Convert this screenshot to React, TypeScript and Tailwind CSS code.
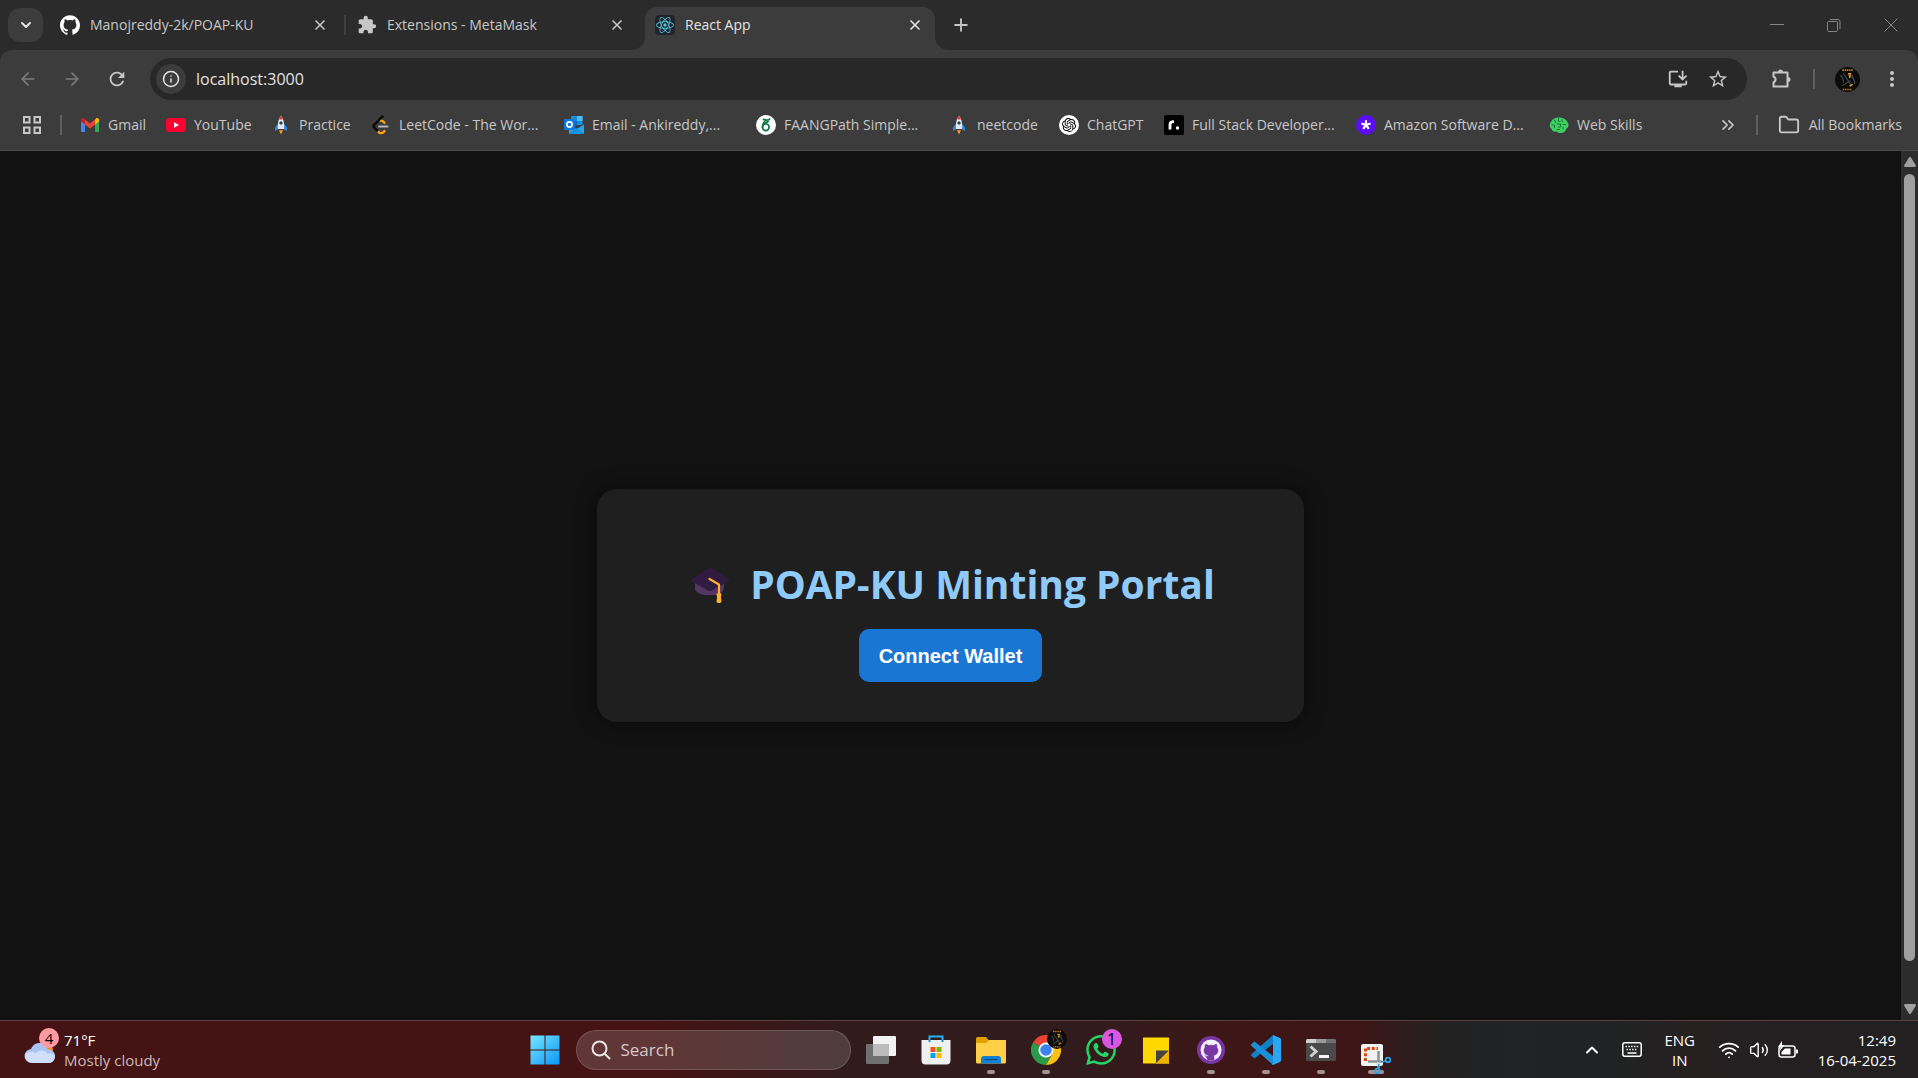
import React, { useState } from "react";
import { SiGithub, SiReact, SiOpenai, SiWhatsapp } from "react-icons/si";
import { MdExtension, MdMoreVert, MdInstallDesktop, MdStarBorder, MdRefresh } from "react-icons/md";
import { ArrowLeft, ArrowRight, ChevronDown, ChevronUp, ChevronsRight, Info, X, Plus, Folder, Wifi, Volume2 } from "lucide-react";

function Gmail() {
  return (
    <svg viewBox="0 0 20 20" className="size-5" aria-hidden="true">
      <path d="M1 4v12.2c0 .5.4.8.9.8H5V9z" fill="#4285f4" />
      <path d="M19 4v12.2c0 .5-.4.8-.9.8H15V9z" fill="#34a853" />
      <path d="M15 5v4.5l4-3V4.800c0-1.700-1.900-2.400-3-1.500z" fill="#fbbc04" />
      <path d="M5 9.500V4.500l5 3.900 5-3.900v5L10 13.400z" fill="#ea4335" />
      <path d="M1 4.800v1.700l4 3V4.500L4 3.300C2.700 2.400 1 3.200 1 4.800z" fill="#c5221f" />
    </svg>
  );
}

function YouTube() {
  return (
    <svg viewBox="0 0 20 20" className="size-5" aria-hidden="true">
      <rect x="0" y="3" width="20" height="14" rx="3.500" fill="#ff0033" />
      <path d="M8 7.200v5.600l5-2.800z" fill="#fff" />
    </svg>
  );
}

function Rocket() {
  return (
    <svg viewBox="0 0 20 20" className="size-5" aria-hidden="true">
      <path d="M7 8.500 4 12.500v3.500l3.500-2zM13 8.500l3 4v3.500l-3.500-2z" fill="#2f8de4" />
      <path d="M10 1C7.500 3.500 6.700 7 7 14h6c.3-7-.5-10.500-3-13z" fill="#e6e9ec" />
      <path d="M10 1C9 2 8.300 3.200 7.900 4.500h4.200C11.700 3.200 11 2 10 1z" fill="#e23b3b" />
      <circle cx="10" cy="8" r="1.700" fill="#29495e" />
      <path d="M8 14h4v1.200H8z" fill="#7b2f2f" />
      <path d="M8 15.200h4L10 19.500z" fill="#ff9d1c" />
    </svg>
  );
}

function LeetCode() {
  return (
    <svg viewBox="0 0 20 20" className="size-5" fill="none" strokeWidth="2.400" strokeLinecap="round" strokeLinejoin="round" aria-hidden="true">
      <path d="M9.500 5.600c1.600-.4 2.600.6 4 2.200" stroke="#ffa116" />
      <path d="M7.500 17c2 1.800 4.200 1.500 6-1" stroke="#ffa116" />
      <path d="M11.500 1.500 3 10c-.6.700-.6 1.500 0 2.200l3 3.300" stroke="#050505" />
      <path d="M8 11.500h8.500" stroke="#b3b3b3" strokeWidth="2" />
    </svg>
  );
}

function Outlook() {
  return (
    <svg viewBox="0 0 20 20" className="size-5" aria-hidden="true">
      <path d="M7 1h11.500v9H7z" fill="#1490df" />
      <path d="M13 1h5.500v5H13z" fill="#50b9ff" />
      <path d="M7 6h6v5H7z" fill="#0364b8" />
      <path d="M5 9.500 12.500 14 20 9.500V18a1 1 0 0 1-1 1H6a1 1 0 0 1-1-1z" fill="#28a8ea" />
      <path d="M5 18.500 13 13l7 5.500-1 .5H6z" fill="#1490df" />
      <rect x="0" y="4" width="11" height="11" rx="1" fill="#0f78d4" />
      <circle cx="5.500" cy="9.500" r="2.600" fill="none" stroke="#fff" strokeWidth="1.600" />
    </svg>
  );
}

function Overleaf() {
  return (
    <svg viewBox="0 0 20 20" className="size-5" aria-hidden="true">
      <circle cx="10" cy="10" r="10" fill="#fff" />
      <g fill="none" stroke="#0f7a42" strokeWidth="1.700" strokeLinecap="round">
        <ellipse cx="9.800" cy="12.300" rx="3.300" ry="3.300" />
        <path d="M6.500 12.300c-.3-3.800 2.500-7.300 7.500-8.300-2 1.500-4.500 1.200-6.500.4M7.500 9.700c1.200-1.500 3-2 4.500-3" />
      </g>
    </svg>
  );
}

function ChatGPT() {
  return (
    <span className="flex size-5 items-center justify-center rounded-full bg-white">
      <SiOpenai className="size-[14px] text-black" />
    </span>
  );
}

function Roadmap() {
  return (
    <svg viewBox="0 0 20 20" className="size-5" aria-hidden="true">
      <rect width="20" height="20" rx="2" fill="#000" />
      <path d="M6 14.500V9.500C6 7.800 7.200 6.700 10 6.700" fill="none" stroke="#fff" strokeWidth="2.800" />
      <circle cx="13.500" cy="13" r="1.700" fill="#fff" />
    </svg>
  );
}

function Asterisk() {
  return (
    <svg viewBox="0 0 20 20" className="size-5" aria-hidden="true">
      <circle cx="10" cy="10" r="10" fill="#5b0df5" />
      <path d="M10 10V5.200M10 10l4.600-1.500M10 10l2.800 3.900M10 10l-2.800 3.900M10 10 5.400 8.500" stroke="#fff" strokeWidth="2.200" />
    </svg>
  );
}

function Brain() {
  return (
    <svg viewBox="0 0 20 20" className="size-5" aria-hidden="true">
      <path d="M2 7c1-3 4-4.500 8-4.500s7 1.500 8.500 4.500 1.500 5-1 6.500c-.5 2.500-2.500 4-5 4.500-2 .3-3.500-.2-4.500-1.500-3 .6-5-.4-5.500-2.700C0 12 .5 9 2 7z" fill="#3fcf5f" />
      <path d="M5 5.500c1.500 0 2 1 1.500 2.500M9.500 3v3.500h2M14 4.500c-1.500.5-1.500 2 0 2.500M2.500 10h3v3M8 9h3.500v3H9M13.500 9.500H17M14 12v2.500M8 14.500h3" fill="none" stroke="#14773a" strokeWidth="1" />
    </svg>
  );
}

function Avatar() {
  return (
    <svg viewBox="0 0 24 24" className="size-full" aria-hidden="true">
      <circle cx="12" cy="12" r="12" fill="#0b0b0b" />
      <path d="M7 3h10" stroke="#b5741b" strokeWidth="1.700" strokeDasharray="1.600 .5" />
      <path d="M7.500 21.500h9" stroke="#b5741b" strokeWidth="1.400" strokeDasharray="1.500 .6" />
      <path d="M5 8c2 1 3 3 3 7M8 6l7 11M12 8c4 1 7 4 7 8M7 18l8-5M16 7l2 5" fill="none" stroke="#3c4144" strokeWidth="1.300" />
      <path d="M12.500 6.500h2.200l-.8 4M14 18.500l3-2" fill="none" stroke="#e5941f" strokeWidth="1.500" />
    </svg>
  );
}

function PuzzleOutline() {
  return (
    <svg viewBox="0 0 24 24" className="size-6" aria-hidden="true">
      <path d="M4.500 5.500h14v14h-14v-4.300a2.800 2.800 0 0 0 0-5.400z" fill="none" stroke="currentColor" strokeWidth="2" strokeLinejoin="round" />
      <path d="M9 5a2.500 2.500 0 0 1 5 0zM19 10a2.500 2.500 0 0 1 0 5z" fill="currentColor" />
    </svg>
  );
}

const bookmarks: { label: string; icon: React.ReactNode; width: string }[] = [
  { label: "Gmail", icon: <Gmail />, width: "w-[86px]" },
  { label: "YouTube", icon: <YouTube />, width: "w-[105px]" },
  { label: "Practice", icon: <Rocket />, width: "w-[100px]" },
  { label: "LeetCode - The Wor...", icon: <LeetCode />, width: "w-[193px]" },
  { label: "Email - Ankireddy,...", icon: <Outlook />, width: "w-[192px]" },
  { label: "FAANGPath Simple...", icon: <Overleaf />, width: "w-[193px]" },
  { label: "neetcode", icon: <Rocket />, width: "w-[110px]" },
  { label: "ChatGPT", icon: <ChatGPT />, width: "w-[105px]" },
  { label: "Full Stack Developer...", icon: <Roadmap />, width: "w-[192px]" },
  { label: "Amazon Software D...", icon: <Asterisk />, width: "w-[193px]" },
  { label: "Web Skills", icon: <Brain />, width: "w-[120px]" },
];

function TabStrip() {
  return (
    <header className="flex h-[50px] items-center bg-[#2b2b2b] pl-2 text-sm text-[#c7c7c7]">
      <button aria-label="Search tabs" className="flex h-[34px] w-[35px] items-center justify-center rounded-xl bg-[#3c3c3c] text-[#e3e3e3]">
        <ChevronDown className="size-4" strokeWidth={3} />
      </button>
      <div className="flex w-[301px] items-center pl-[17px]">
        <SiGithub className="size-5 text-white" />
        <span className="ml-[10px] flex-1 whitespace-nowrap">Manojreddy-2k/POAP-KU</span>
        <button aria-label="Close tab" className="mr-4"><X className="size-4" strokeWidth={2.5} /></button>
      </div>
      <div className="h-5 w-[2px] bg-[#3f3f3f]" />
      <div className="flex w-[299px] items-center pl-[11px]">
        <MdExtension className="size-5" />
        <span className="ml-[10px] flex-1 whitespace-nowrap">Extensions - MetaMask</span>
        <button aria-label="Close tab" className="mr-5"><X className="size-4" strokeWidth={2.5} /></button>
      </div>
      <div className="relative flex h-[43px] w-[290px] items-center self-end rounded-t-xl bg-[#3c3c3c] pb-[7px] pl-[10px] text-[#e3e3e3]">
        <svg viewBox="0 0 14 14" className="absolute bottom-0 -left-[14px] size-[14px]" aria-hidden="true"><path d="M14 0v14H0C8 14 14 8 14 0z" fill="#3c3c3c" /></svg>
        <svg viewBox="0 0 14 14" className="absolute -right-[14px] bottom-0 size-[14px]" aria-hidden="true"><path d="M0 0v14h14C6 14 0 8 0 0z" fill="#3c3c3c" /></svg>
        <span className="flex size-5 items-center justify-center rounded-sm bg-[#20232a]"><SiReact className="size-[18px] text-[#53c1de]" /></span>
        <span className="ml-[10px] flex-1">React App</span>
        <button aria-label="Close tab" className="mr-3"><X className="size-4" strokeWidth={2.5} /></button>
      </div>
      <button aria-label="New tab" className="ml-4"><Plus className="size-5" strokeWidth={2.2} /></button>
      <div className="ml-auto flex items-center gap-[43px] pr-5 text-[#858585]">
        <button aria-label="Minimize"><svg viewBox="0 0 14 14" className="size-[14px]" fill="none" stroke="currentColor"><path d="M0 6.500h14" /></svg></button>
        <button aria-label="Restore"><svg viewBox="0 0 14 14" className="size-[14px]" fill="none" stroke="currentColor"><rect x=".5" y="3.500" width="10" height="10" rx="1" /><path d="M3 1.500h8a2 2 0 0 1 2 2V11" /></svg></button>
        <button aria-label="Close window"><svg viewBox="0 0 14 14" className="size-[14px]" fill="none" stroke="currentColor"><path d="m.5.5 13 13M13.500.5l-13 13" /></svg></button>
      </div>
    </header>
  );
}

function Toolbar() {
  const [url, setUrl] = useState("localhost:3000");
  return (
    <div className="flex h-[58px] items-center rounded-t-xl bg-[#3c3c3c] pr-[14px] pl-[18px] text-[#c7c7c7]">
      <button aria-label="Back" className="text-[#7c7c7c]"><ArrowLeft className="size-5" /></button>
      <button aria-label="Forward" className="ml-6 text-[#7c7c7c]"><ArrowRight className="size-5" /></button>
      <button aria-label="Reload" className="ml-6"><MdRefresh className="size-[22px]" /></button>
      <div className="ml-[22px] flex h-[42px] flex-1 items-center rounded-full bg-[#282828] pr-[18px] pl-[6px]">
        <button aria-label="Site information" className="flex size-[30px] items-center justify-center rounded-full bg-[#3c3c3c] text-[#e3e3e3]"><Info className="size-[18px]" /></button>
        <input aria-label="Address" value={url} onChange={(e) => setUrl(e.target.value)} className="ml-[10px] min-w-0 flex-1 bg-transparent text-base text-[#e3e3e3] outline-none" />
        <button aria-label="Install app"><MdInstallDesktop className="size-[22px]" /></button>
        <button aria-label="Bookmark page" className="ml-[18px]"><MdStarBorder className="size-[22px]" /></button>
      </div>
      <button aria-label="Extensions" className="ml-[22px]"><PuzzleOutline /></button>
      <div className="ml-5 h-5 w-[2px] bg-[#5f5f5f]" />
      <button aria-label="Profile" className="ml-5 size-[25px]"><Avatar /></button>
      <button aria-label="Menu" className="ml-5"><MdMoreVert className="size-6" /></button>
    </div>
  );
}

function Bookmarks() {
  return (
    <nav className="flex h-[43px] items-center border-b border-[#4a4a4a] bg-[#3c3c3c] pr-4 pb-2 pl-[23px] text-sm text-[#c7c7c7]">
      <button aria-label="Apps">
        <svg viewBox="0 0 18 18" className="size-[18px]" fill="none" stroke="currentColor" strokeWidth="2"><path d="M1 1h5.500v5.500H1zM11.500 1H17v5.500h-5.500zM1 11.500h5.500V17H1zM11.500 11.500H17V17h-5.500z" /></svg>
      </button>
      <div className="mr-[18px] ml-[19px] h-5 w-[2px] bg-[#5f5f5f]" />
      {bookmarks.map((b) => (
        <a key={b.label} href="#" className={"flex shrink-0 items-center gap-2 whitespace-nowrap " + b.width}>
          {b.icon}
          {b.label}
        </a>
      ))}
      <button aria-label="More bookmarks" className="ml-auto"><ChevronsRight className="size-5" /></button>
      <div className="ml-[18px] h-5 w-[2px] bg-[#5f5f5f]" />
      <a href="#" className="ml-5 flex items-center gap-[9px] whitespace-nowrap"><Folder className="size-[22px]" strokeWidth={2} />All Bookmarks</a>
    </nav>
  );
}

function GraduationCap() {
  return (
    <svg viewBox="0 0 40 40" className="size-10" aria-hidden="true">
      <path d="M5 15v10c0 2 5 6 10 6h10c5 0 9-4 9-7v-9z" fill="#533566" />
      <path d="M18 4.500c1.300-.8 2.700-.8 4 0L38.500 15.300c.9.600.9 1.400 0 2L22 26.500c-1.300.8-2.700.8-4 0L1.500 17.300c-.9-.6-.9-1.400 0-2z" fill="#321b41" />
      <path d="m19.500 15 9.500 5.500v13" fill="none" stroke="#ffb02e" strokeWidth="2.200" strokeLinecap="round" strokeLinejoin="round" />
      <path d="M26.500 31c0-3 5-3 5 0l-.6 1.500.6 5c-.5 2-4.500 2-5 0l.6-5z" fill="#ffb02e" />
    </svg>
  );
}

function Page() {
  return (
    <div className="flex min-h-0 flex-1 bg-[#121212]">
      <main className="flex flex-1 items-center justify-center pt-10">
        <section className="flex flex-col items-center rounded-[20px] bg-[#1f1f1f] px-[89px] pt-[68px] pb-10 shadow-[0_0_20px_rgba(0,0,0,0.5)]">
          <h1 className="flex h-[54px] items-center gap-5 pl-1 text-[39px] font-bold whitespace-nowrap text-[#90caf9]"><GraduationCap />POAP-KU Minting Portal</h1>
          <button className="mt-[18px] h-[53px] rounded-[10px] bg-[#1976d2] px-5 font-['Liberation_Sans',Arial,sans-serif] text-xl font-bold text-white">Connect Wallet</button>
        </section>
      </main>
      <div className="flex w-[17px] flex-col items-center bg-[#2c2c2c] py-[6px]">
        <svg viewBox="0 0 12 10" className="h-[10px] w-3 shrink-0" fill="#9f9f9f"><path d="M6 0c.4 0 .7.200 1 .6L12 8.500 11.300 10H.7L0 8.500 5 .6C5.300.2 5.600 0 6 0z" /></svg>
        <div className="mt-[7px] mb-[43px] w-[11px] flex-1 rounded-full bg-[#9f9f9f]" />
        <svg viewBox="0 0 12 10" className="h-[10px] w-3 shrink-0 rotate-180" fill="#9f9f9f"><path d="M6 0c.4 0 .7.200 1 .6L12 8.500 11.300 10H.7L0 8.500 5 .6C5.300.2 5.600 0 6 0z" /></svg>
      </div>
    </div>
  );
}

function StoreIcon() {
  return (
    <svg viewBox="0 0 30 30" className="size-[30px]" aria-hidden="true">
      <path d="M8.500 7V1.500h13V7" fill="none" stroke="#22b3ee" strokeWidth="2" />
      <path d="M.5 5h29v20.500a4 4 0 0 1-4 4h-21a4 4 0 0 1-4-4z" fill="#f0f0f0" />
      <path d="M7.500 5h2v2h-2zM20.500 5h2v2h-2z" fill="#1790d0" />
      <path d="M9.500 12h5v5h-5z" fill="#f25022" /><path d="M15.500 12h5v5h-5z" fill="#7fba00" />
      <path d="M9.500 18h5v5h-5z" fill="#00a4ef" /><path d="M15.500 18h5v5h-5z" fill="#ffb900" />
    </svg>
  );
}

function TaskViewIcon() {
  return (
    <svg viewBox="0 0 30 30" className="size-[30px]" aria-hidden="true">
      <rect x="0" y="9" width="23" height="20" rx="1" fill="#707070" />
      <rect x="7" y="1" width="23" height="20" rx="1" fill="#f2f2f2" />
      <rect x="7" y="9" width="16" height="12" fill="#bcbcbc" />
    </svg>
  );
}

function ExplorerIcon() {
  return (
    <svg viewBox="0 0 30 30" className="size-[30px]" aria-hidden="true">
      <path d="M0 3.500A1.500 1.500 0 0 1 1.500 2H10l3 3.500V10H0z" fill="#e0a000" />
      <path d="M0 8h10l3-3h17v22a1.500 1.500 0 0 1-1.500 1.500h-27A1.500 1.500 0 0 1 0 27z" fill="#ffcf48" />
      <path d="M5 28.500V24a3 3 0 0 1 3-3h14a3 3 0 0 1 3 3v4.500z" fill="#1280d2" />
      <path d="M8.500 24.500h13" stroke="#0a4f8c" strokeWidth="1.300" />
    </svg>
  );
}

function ChromeIcon() {
  return (
    <svg viewBox="0 0 30 30" className="size-[30px]" aria-hidden="true">
      <path d="M15 15 2 7.500a15 15 0 0 1 26 0z" fill="#ea4335" />
      <path d="M15 15 2 7.500A15 15 0 0 0 15 30l6.500-11.200z" fill="#2b9a49" />
      <path d="M15 15V7.500h13A15 15 0 0 1 15 30l6.500-11.200z" fill="#fbc116" />
      <circle cx="15" cy="15" r="7.500" fill="#fff" />
      <circle cx="15" cy="15" r="5.800" fill="#3b82f0" />
    </svg>
  );
}

function StickyIcon() {
  return (
    <svg viewBox="0 0 30 30" className="size-[30px]" aria-hidden="true">
      <path d="M2 2.500h26v26H2z" fill="#ffd800" />
      <path d="M15 15.500h13L15 28.500z" fill="#46443c" />
      <path d="M28 15.500v13H15z" fill="#efb100" />
    </svg>
  );
}

function CodeIcon() {
  return (
    <svg viewBox="0 0 30 30" className="size-[30px]" aria-hidden="true">
      <path d="M22 0v9L3.500 23.500 0 20.500v-1L21.500.500z" fill="#0f7fc8" />
      <path d="M22 30v-9L3.500 6.500 0 9.500v1L21.500 29.500z" fill="#1a8fd8" />
      <path d="m22 0 7 3a1.500 1.500 0 0 1 1 1.400v21.200a1.500 1.500 0 0 1-1 1.400l-7 3-1-.5 1-1.500V2z" fill="#2aa7f0" />
    </svg>
  );
}

function TerminalIcon() {
  return (
    <svg viewBox="0 0 30 30" className="size-[30px]" aria-hidden="true">
      <rect y="4" width="30" height="22" rx="1.500" fill="#4a4a4a" />
      <path d="M0 8V5.500A1.500 1.500 0 0 1 1.500 4H10v4z" fill="#cfcfcf" /><path d="M10 4h10v4H10z" fill="#9b9b9b" /><path d="M20 4h8.500A1.500 1.500 0 0 1 30 5.500V8H20z" fill="#707070" />
      <path d="m4.500 11.500 5.500 5-5.500 5" fill="none" stroke="#d0d0d0" strokeWidth="3" /><path d="M13 21.500h10" stroke="#f5f5f5" strokeWidth="3" />
    </svg>
  );
}

function SnippingIcon() {
  return (
    <svg viewBox="0 0 30 30" className="size-[30px]" aria-hidden="true">
      <rect width="22" height="22" rx="2" fill="#f2f2f2" />
      <path d="M4.500 17v-12.500H17" fill="none" stroke="#d9480f" strokeWidth="3" strokeDasharray="3 1.700" />
      <path d="M17.500 7v11.500M7 17.500h14" stroke="#8f9498" strokeWidth="2.600" />
      <path d="M17.500 18v6" stroke="#b8d8ea" strokeWidth="2" />
      <circle cx="27" cy="16" r="2.300" fill="none" stroke="#2aa4e8" strokeWidth="1.800" /><circle cx="16.500" cy="27" r="2.300" fill="none" stroke="#2aa4e8" strokeWidth="1.800" />
      <path d="m20 18 5-1M17.800 20l-.5 5" stroke="#2aa4e8" strokeWidth="1.500" />
    </svg>
  );
}

function GithubDesktop() {
  return (
    <svg viewBox="0 0 30 30" className="size-[30px]" aria-hidden="true">
      <circle cx="15" cy="15" r="14" fill="#7a35a4" />
      <circle cx="15" cy="15" r="10.500" fill="#f6f0fa" />
      <path d="M12 25v-3.500c-2 .4-3-.5-3.800-2M12.500 20.500c-3-.6-4.500-2.200-4.500-5 0-1.300.5-2.400 1.200-3.200-.3-1-.2-2 .2-3 1.300.1 2.200.5 3.200 1.200 1.600-.4 3.200-.4 4.800 0 1-.7 2-1.100 3.200-1.200.4 1 .5 2 .2 3 .8.8 1.200 1.900 1.200 3.200 0 2.800-1.500 4.400-4.500 5 .4.500.5 1 .5 1.800V25h-6v-2.700c0-.8.100-1.300.5-1.800z" fill="#7a35a4" stroke="#7a35a4" strokeWidth=".6" />
    </svg>
  );
}

function KeyboardIcon() {
  return (
    <svg viewBox="0 0 20 15" className="h-[15px] w-5" aria-hidden="true">
      <rect x=".8" y=".8" width="18.400" height="13.400" rx="2" fill="none" stroke="#fff" strokeWidth="1.500" />
      <path d="M3.500 4.500h13M4.500 7.500h11" stroke="#fff" strokeWidth="1.500" strokeDasharray="1.500 1.300" />
      <path d="M5.500 11h9" stroke="#fff" strokeWidth="1.500" />
    </svg>
  );
}

const apps: { name: string; icon: React.ReactNode; running?: boolean; badge?: React.ReactNode }[] = [
  { name: "Task view", icon: <TaskViewIcon /> },
  { name: "Microsoft Store", icon: <StoreIcon /> },
  { name: "File Explorer", icon: <ExplorerIcon />, running: true },
  { name: "Chrome", icon: <ChromeIcon />, running: true, badge: <Avatar /> },
  {
    name: "WhatsApp",
    icon: <SiWhatsapp className="size-[30px] text-[#25d366]" />,
    badge: <span className="flex size-full items-center justify-center rounded-full bg-[#d856e0] text-base text-black">1</span>,
  },
  { name: "Sticky Notes", icon: <StickyIcon /> },
  { name: "GitHub Desktop", icon: <GithubDesktop />, running: true },
  { name: "Visual Studio Code", icon: <CodeIcon />, running: true },
  { name: "Terminal", icon: <TerminalIcon />, running: true },
];

function Taskbar() {
  return (
    <footer className="flex h-[58px] shrink-0 items-center justify-between border-t border-[#5b4141] bg-[linear-gradient(90deg,#451313_0%,#451313_34%,#321b1c_44%,#321b1c_57%,#3f1616_65%,#3d1516_71%,#242223_75%,#202424_79%,#202323_84%,#262021_88%,#222021_100%)] text-[15px] text-white">
      <button className="flex w-[508px] items-center pl-6 text-left leading-5">
        <span className="relative h-8 w-8">
          <svg viewBox="0 0 32 32" className="size-8" aria-hidden="true">
            <circle cx="23" cy="16" r="6" fill="#f58a1f" />
            <path d="M8 29a7 7 0 0 1-1-14c1.500-4 4.500-6 8-6 4.500 0 7.500 2.500 8.500 6.500C28 15 31 18 31 22s-2.500 7-6.500 7z" fill="#a9c5f5" />
            <path d="M8 29a7 7 0 0 1-6.500-9c3-3 8-3 10-.5 3-4 9-4.500 12 .5 3-1 5.500-.5 7.400 1.500C31 26 28.500 29 24.500 29z" fill="#cfdff9" />
          </svg>
          <span className="absolute -top-[6px] left-[15px] flex size-5 items-center justify-center rounded-full bg-[#ff99a4] text-black">4</span>
        </span>
        <span className="ml-2 flex flex-col"><span>71°F</span><span className="text-[#cbb9b9]">Mostly cloudy</span></span>
      </button>
      <div className="flex items-center">
        <button aria-label="Start">
          <svg viewBox="0 0 30 30" className="size-[30px]" aria-hidden="true">
            <defs><linearGradient id="win" x1="0" y1="0" x2="30" y2="30" gradientUnits="userSpaceOnUse"><stop stopColor="#77eaff" /><stop offset="1" stopColor="#0a93f7" /></linearGradient></defs>
            <path d="M.5.5h14v14H.5zM15.500.5h14v14h-14zM.5 15.500h14v14H.5zM15.500 15.500h14v14h-14z" fill="url(#win)" />
          </svg>
        </button>
        <label className="ml-4 flex h-10 w-[275px] items-center rounded-full border border-white/15 bg-white/15 pl-[14px]">
          <svg viewBox="0 0 20 20" className="size-5 shrink-0" fill="none" stroke="#eee5e5" strokeWidth="2" strokeLinecap="round" aria-hidden="true"><circle cx="8.500" cy="8.500" r="7" /><path d="m14 14 4.500 4.500" /></svg>
          <input aria-label="Search" placeholder="Search" className="ml-[10px] min-w-0 flex-1 bg-transparent text-[17px] outline-none placeholder:text-[#d6c9c9]" />
        </label>
        <div className="ml-[15px] flex gap-[25px]">
          {apps.map((a) => (
            <button key={a.name} aria-label={a.name} className="relative size-[30px]">
              {a.icon}
              {a.badge && <span className="absolute -top-[6px] left-4 size-5">{a.badge}</span>}
              {a.running && <span className="absolute -bottom-[9px] left-[11px] h-1 w-2 rounded-full bg-[#a39494]" />}
            </button>
          ))}
          <button aria-label="Snipping Tool" className="relative size-[30px] pt-[9px]">
            <span className="absolute -bottom-[9px] left-[7px] h-1 w-4 rounded-full bg-[#a39494]" />
            <span className="relative block"><SnippingIcon /></span>
          </button>
        </div>
      </div>
      <div className="flex w-[506px] items-center justify-end pr-[22px] text-center leading-5">
        <button aria-label="Show hidden icons"><ChevronUp className="size-5" strokeWidth={2.4} /></button>
        <button aria-label="Touch keyboard" className="ml-5"><KeyboardIcon /></button>
        <button className="ml-5 flex w-9 flex-col items-center"><span>ENG</span><span>IN</span></button>
        <button aria-label="Network, volume and battery" className="ml-5 flex items-center gap-[9px]">
          <Wifi className="size-[22px]" /><Volume2 className="size-5" strokeWidth={1.700} />
          <svg viewBox="0 0 20 18" className="h-[18px] w-5" aria-hidden="true"><rect x="1" y="5" width="16" height="11" rx="2.500" fill="none" stroke="#fff" strokeWidth="1.500" /><path d="M7 7.500h5.500v6H3.500V11z" fill="#fff" /><path d="M18 8.500h1c.6 0 1 .4 1 1v2c0 .6-.4 1-1 1h-1z" fill="#fff" /><path d="M4 0 0 6h2.500L1.500 10.500 6.500 4H4z" fill="#fff" /></svg>
        </button>
        <button className="ml-5 flex flex-col items-end"><span>12:49</span><span>16-04-2025</span></button>
      </div>
    </footer>
  );
}

export default function App() {
  return (
    <div className="flex h-screen flex-col overflow-hidden bg-[#2b2b2b] font-['Open_Sans','Noto_Sans',sans-serif]">
      <TabStrip />
      <Toolbar />
      <Bookmarks />
      <Page />
      <Taskbar />
    </div>
  );
}
